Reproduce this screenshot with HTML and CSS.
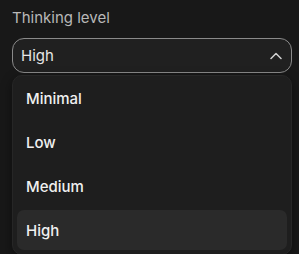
FILE: index.html
```html
<!DOCTYPE html>
<html lang="en">
<head>
    <meta charset="UTF-8">
    <meta name="viewport" content="width=device-width, initial-scale=1.0">
    <title>Thinking level</title>
    <link rel="stylesheet" href="styles.css">
</head>
<body>
    <div class="field">
        <label class="field-label">Thinking level</label>
        <!-- Select mit offenem Menü -->
        <div class="select">
            <span class="select-value">High</span>
            <svg class="chevron" width="12" height="8" viewBox="0 0 12 8">
                <path d="M1 6.5 L6 1.5 L11 6.5" fill="none" stroke="#d0d0d0" stroke-width="1.5" stroke-linecap="round" stroke-linejoin="round"/>
            </svg>
        </div>
        <ul class="menu">
            <li class="menu-item">Minimal</li>
            <li class="menu-item">Low</li>
            <li class="menu-item">Medium</li>
            <li class="menu-item active">High</li>
        </ul>
    </div>
</body>
</html>
```

FILE: styles.css
```css
body {
    margin: 0;
    background-color: #181818;
    font-family: Inter, "Noto Sans", sans-serif;
    color: #eeeeee;
}

.field {
    display: flex;
    flex-direction: column;
    padding: 9px 7px 0 12px;
}

.field-label {
    font-size: 15px;
    line-height: 18px;
    color: #b8b8b8;
    margin-bottom: 11px;
}

.select {
    display: flex;
    align-items: center;
    justify-content: space-between;
    height: 33px;
    padding: 0 8px;
    border: 1px solid #8a8a8a;
    border-radius: 12px;
    background-color: #202020;
}

.select-value {
    font-size: 15px;
    color: #e6e6e6;
}

.chevron {
    margin-right: 1px;
}

.menu {
    list-style: none;
    margin: 2px 0 0;
    padding: 2px 4px 4px;
    display: flex;
    flex-direction: column;
    gap: 4px;
    background-color: #1e1e1e;
    border: 1px solid #262626;
    border-radius: 10px;
    box-shadow: 0 4px 12px rgba(0, 0, 0, 0.45);
}

.menu-item {
    height: 40px;
    display: flex;
    align-items: center;
    padding: 0 9px;
    font-size: 15px;
    font-weight: 500;
    color: #f0f0f0;
    border-radius: 7px;
}

.menu-item.active {
    background-color: #2a2a2a;
}
```
